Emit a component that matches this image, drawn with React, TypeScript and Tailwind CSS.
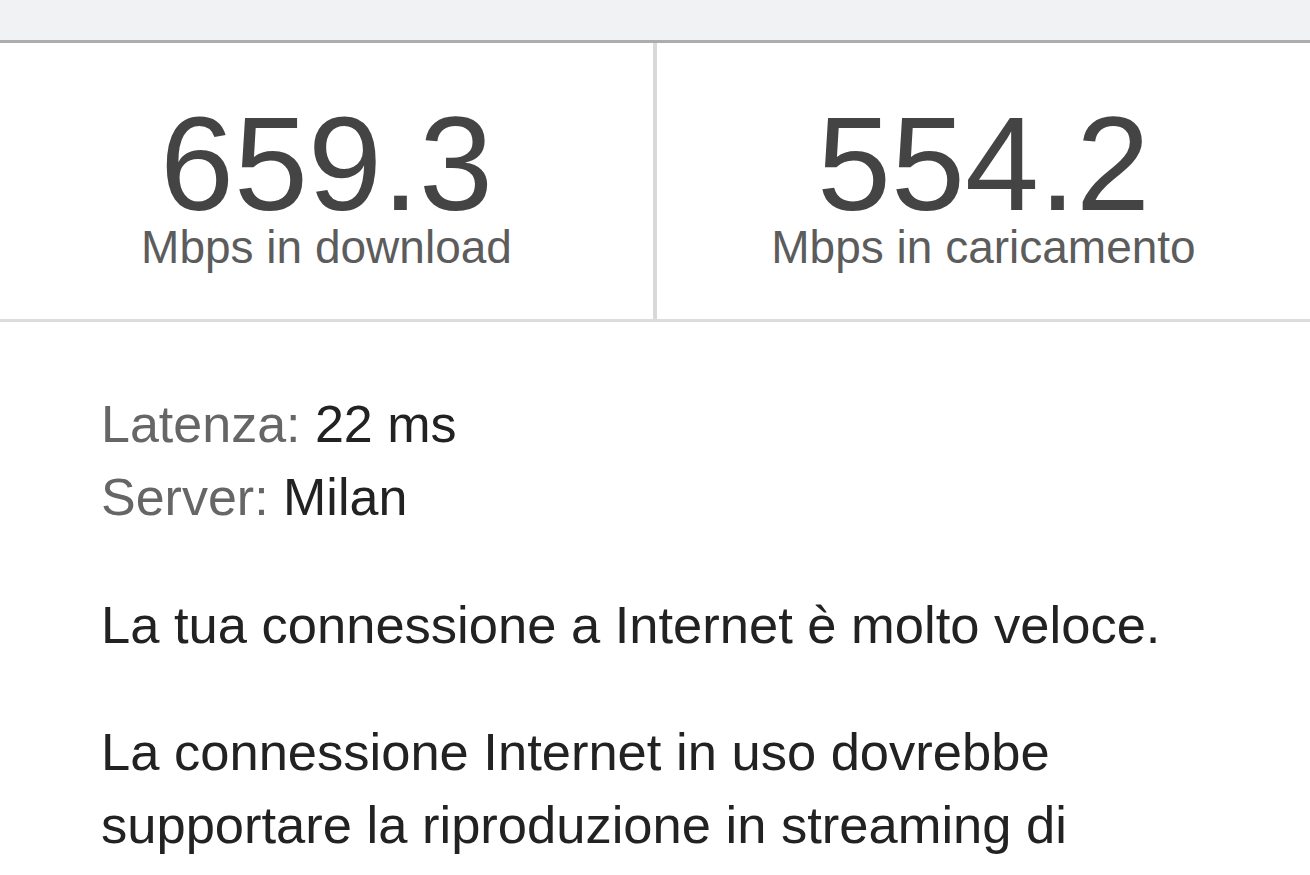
import React from "react";

export default function App() {
  return (
    <div className="w-[1310px] h-[875px] overflow-hidden bg-white font-['Liberation_Sans',Arial,sans-serif]">
      <div className="h-[43px] bg-[#f1f2f4] border-b-[3px] border-[#adadad]" />
      <div className="flex h-[279px] border-b-[3px] border-[#dcdcdc]">
        <div className="flex-1 flex flex-col items-center pt-[61px]">
          <div className="text-[133px] leading-[120px] text-[#444444]">659.3</div>
          <div className="mt-[3px] text-[46px] leading-[40px] text-[#5c5c5c]">Mbps in download</div>
        </div>
        <div className="w-[4px] bg-[#d9d9d9]" />
        <div className="flex-1 flex flex-col items-center pt-[61px]">
          <div className="text-[133px] leading-[120px] text-[#444444]">554.2</div>
          <div className="mt-[3px] text-[46px] leading-[40px] text-[#5c5c5c]">Mbps in caricamento</div>
        </div>
      </div>
      <div className="w-[1190px] pl-[101px] pt-[66px] text-[52.5px] leading-[73px] text-[#222222]">
        <div className="text-[52px]">
          <span className="text-[#666666]">Latenza:</span> 22 ms
        </div>
        <div className="text-[52px]">
          <span className="text-[#666666]">Server:</span> Milan
        </div>
        <p className="mt-[54px]">La tua connessione a Internet è molto veloce.</p>
        <p className="mt-[54px]">
          La connessione Internet in uso dovrebbe supportare la riproduzione in streaming di video in 4K, videoconferenze e gaming su più dispositivi contemporaneamente.
        </p>
      </div>
    </div>
  );
}
